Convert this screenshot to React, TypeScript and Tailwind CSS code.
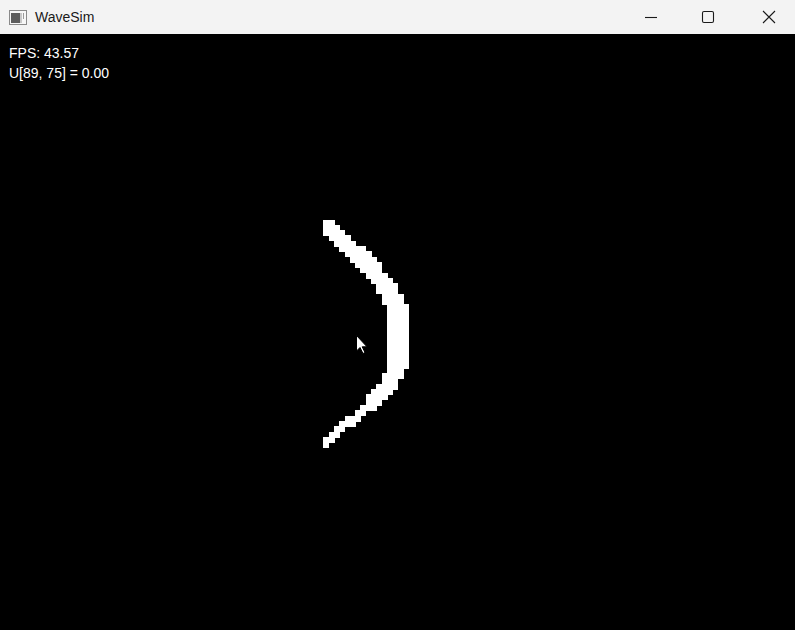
import React from 'react';

type Pt = [number, number];

// wave front outline, page coordinates (content starts at y = 34)
const outer: Pt[] = [
  [328, 220], [345, 233], [361, 248], [376, 262], [387, 275], [396, 289], [402, 299], [408, 309],
  [408, 363], [402, 373], [395, 385], [387, 395], [377, 404], [364, 414], [351, 424], [339, 434],
  [330, 443], [327, 450],
];
const inner: Pt[] = [
  [323, 446], [331, 433], [343, 423], [355, 412], [367, 400], [377, 387], [386, 375], [390, 364],
  [390, 335], [388, 312], [382, 297], [375, 285], [365, 273], [352, 259], [339, 246], [327, 234],
  [323, 226],
];
const poly: Pt[] = [...outer, ...inner].map(([x, y]) => [x, y - 34]);

function inside(x: number, y: number) {
  let c = false;
  for (let i = 0, j = poly.length - 1; i < poly.length; j = i++) {
    const [xi, yi] = poly[i];
    const [xj, yj] = poly[j];
    if (yi > y !== yj > y && x < ((xj - xi) * (y - yi)) / (yj - yi) + xi) c = !c;
  }
  return c;
}

const CELL = 5.3;
const cells: Pt[] = [];
for (let gx = 58; gx < 80; gx++) {
  for (let gy = 33; gy < 80; gy++) {
    let hits = 0;
    for (let sx = 0; sx < 4; sx++) {
      for (let sy = 0; sy < 4; sy++) {
        if (inside((gx + (sx + 0.5) / 4) * CELL, (gy + (sy + 0.5) / 4) * CELL)) hits++;
      }
    }
    if (hits >= 4) cells.push([gx * CELL, gy * CELL]);
  }
}

function WaveField() {
  return (
    <svg className="absolute inset-0" width={795} height={596} shapeRendering="crispEdges">
      {cells.map(([x, y], i) => (
        <rect key={i} x={Math.round(x)} y={Math.round(y)} width={6} height={6} fill="#fff" />
      ))}
      {/* mouse pointer */}
      <path
        d="M356.5 301.5 L356.5 317 L360 313.5 L363 319.5 L365 318.5 L362.2 312.8 L367 312.8 Z"
        fill="#fff"
        stroke="#000"
        strokeWidth={1}
        shapeRendering="auto"
      />
    </svg>
  );
}

function AppIcon() {
  return (
    <svg width={18} height={15} viewBox="0 0 18 15">
      <rect x={0.5} y={0.5} width={17} height={14} fill="#f7f7f7" stroke="#8a8a8a" />
      <rect x={2} y={3} width={9} height={10} fill="#5d5d5d" />
      <rect x={11} y={3} width={2} height={10} fill="#c8c8c8" />
      <rect x={14} y={3} width={1} height={6} fill="#9a9a9a" />
    </svg>
  );
}

function TitleBar() {
  return (
    <div className="flex h-[34px] items-center bg-[#f3f3f3]">
      <div className="ml-[9px] flex items-center">
        <AppIcon />
      </div>
      <span className="ml-[8px] text-[14px] text-[#1a1a1a] font-['Liberation_Sans',sans-serif]">WaveSim</span>
      <div className="ml-auto flex h-full">
        <button className="flex h-full w-[58px] items-center justify-center pl-[2px]">
          <svg width={14} height={14} viewBox="0 0 14 14">
            <path d="M1 7.5 H13" stroke="#1a1a1a" strokeWidth={1.1} />
          </svg>
        </button>
        <button className="flex h-full w-[58px] items-center justify-center">
          <svg width={14} height={14} viewBox="0 0 14 14">
            <rect x={1.5} y={1.5} width={11} height={11} rx={1.5} fill="none" stroke="#1a1a1a" strokeWidth={1.1} />
          </svg>
        </button>
        <button className="flex h-full w-[58px] items-center justify-center pl-[6px]">
          <svg width={14} height={14} viewBox="0 0 14 14">
            <path d="M1 1 L13 13 M13 1 L1 13" stroke="#1a1a1a" strokeWidth={1.1} />
          </svg>
        </button>
      </div>
    </div>
  );
}

export default function App() {
  return (
    <div className="flex h-[630px] w-[795px] flex-col overflow-hidden bg-black">
      <TitleBar />
      <div className="relative flex-1 bg-black">
        <WaveField />
        <div className="relative pl-[9px] pt-[9px] text-[14px] leading-[20px] text-white font-['Liberation_Sans',sans-serif]">
          <div>FPS: 43.57</div>
          <div>U[89, 75] = 0.00</div>
        </div>
      </div>
    </div>
  );
}
